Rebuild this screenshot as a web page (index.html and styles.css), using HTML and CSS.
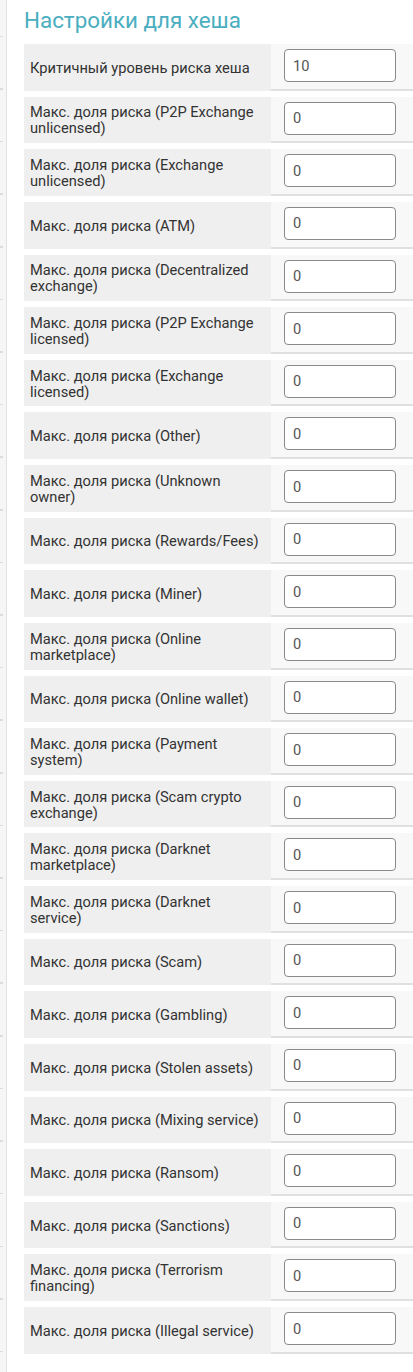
FILE: index.html
```html
<!DOCTYPE html>
<html lang="ru">
<head>
<meta charset="utf-8">
<link rel="stylesheet" href="styles.css">
</head>
<body>
<div class="page">
  <div class="side-strip"></div>
  <div class="content">
    <h3 class="title">Настройки для хеша</h3>
    <div class="rows">
      <div class="row"><div class="label">Критичный уровень риска хеша</div><div class="cell"><input class="field" value="10"></div></div>
      <div class="row"><div class="label">Макс. доля риска (P2P Exchange unlicensed)</div><div class="cell"><input class="field" value="0"></div></div>
      <div class="row"><div class="label">Макс. доля риска (Exchange unlicensed)</div><div class="cell"><input class="field" value="0"></div></div>
      <div class="row"><div class="label">Макс. доля риска (ATM)</div><div class="cell"><input class="field" value="0"></div></div>
      <div class="row"><div class="label">Макс. доля риска (Decentralized exchange)</div><div class="cell"><input class="field" value="0"></div></div>
      <div class="row"><div class="label">Макс. доля риска (P2P Exchange licensed)</div><div class="cell"><input class="field" value="0"></div></div>
      <div class="row"><div class="label">Макс. доля риска (Exchange licensed)</div><div class="cell"><input class="field" value="0"></div></div>
      <div class="row"><div class="label">Макс. доля риска (Other)</div><div class="cell"><input class="field" value="0"></div></div>
      <div class="row"><div class="label">Макс. доля риска (Unknown owner)</div><div class="cell"><input class="field" value="0"></div></div>
      <div class="row"><div class="label">Макс. доля риска (Rewards/Fees)</div><div class="cell"><input class="field" value="0"></div></div>
      <div class="row"><div class="label">Макс. доля риска (Miner)</div><div class="cell"><input class="field" value="0"></div></div>
      <div class="row"><div class="label">Макс. доля риска (Online marketplace)</div><div class="cell"><input class="field" value="0"></div></div>
      <div class="row"><div class="label">Макс. доля риска (Online wallet)</div><div class="cell"><input class="field" value="0"></div></div>
      <div class="row"><div class="label">Макс. доля риска (Payment system)</div><div class="cell"><input class="field" value="0"></div></div>
      <div class="row"><div class="label">Макс. доля риска (Scam crypto exchange)</div><div class="cell"><input class="field" value="0"></div></div>
      <div class="row"><div class="label">Макс. доля риска (Darknet marketplace)</div><div class="cell"><input class="field" value="0"></div></div>
      <div class="row"><div class="label">Макс. доля риска (Darknet service)</div><div class="cell"><input class="field" value="0"></div></div>
      <div class="row"><div class="label">Макс. доля риска (Scam)</div><div class="cell"><input class="field" value="0"></div></div>
      <div class="row"><div class="label">Макс. доля риска (Gambling)</div><div class="cell"><input class="field" value="0"></div></div>
      <div class="row"><div class="label">Макс. доля риска (Stolen assets)</div><div class="cell"><input class="field" value="0"></div></div>
      <div class="row"><div class="label">Макс. доля риска (Mixing service)</div><div class="cell"><input class="field" value="0"></div></div>
      <div class="row"><div class="label">Макс. доля риска (Ransom)</div><div class="cell"><input class="field" value="0"></div></div>
      <div class="row"><div class="label">Макс. доля риска (Sanctions)</div><div class="cell"><input class="field" value="0"></div></div>
      <div class="row"><div class="label">Макс. доля риска (Terrorism financing)</div><div class="cell"><input class="field" value="0"></div></div>
      <div class="row"><div class="label">Макс. доля риска (Illegal service)</div><div class="cell"><input class="field" value="0"></div></div>
    </div>
  </div>
</div>
</body>
</html>
```
FILE: styles.css
```css
html, body {
  margin: 0;
  padding: 0;
  background: #fff;
  font-family: Roboto, "Liberation Sans", sans-serif;
  overflow: hidden;
}
.page {
  display: flex;
  min-height: 1372px;
}
.side-strip {
  width: 6px;
  flex: 0 0 6px;
  border-right: 1px solid #e2e2e2;
  background-color: #f6f6f6;
  background-image: repeating-linear-gradient(to bottom, transparent 0, transparent 35.7px, #dcdcdc 35.7px, #dcdcdc 37.2px, transparent 37.2px, transparent 52.6px);
  background-size: 3px 100%;
  background-repeat: no-repeat;
  background-position: 0 0;
}
.content {
  flex: 1;
  padding-left: 17px;
  min-width: 0;
}
.title {
  margin: 0;
  padding-top: 5px;
  height: 44px;
  box-sizing: border-box;
  font-weight: 400;
  font-size: 22.4px;
  line-height: 30px;
  color: #4aaec0;
}
.rows {
  display: flex;
  flex-direction: column;
  gap: 6px;
}
.row {
  display: flex;
  height: 46.625px;
}
.label {
  width: 247px;
  flex: 0 0 247px;
  box-sizing: border-box;
  background: #efefef;
  padding: 1px 8px 0 6px;
  display: flex;
  align-items: center;
  font-size: 14.67px;
  line-height: 16px;
  color: #333;
}
.cell {
  flex: 1;
  background: #f8f8f8;
  border-bottom: 2px solid #e0e0e0;
  padding: 5px 0 0 13px;
  box-sizing: border-box;
}
.field {
  display: block;
  width: 112px;
  height: 33px;
  box-sizing: border-box;
  border: 1px solid #8a8a8a;
  border-radius: 4px;
  background: #fff;
  padding: 0 8px;
  font-family: Roboto, "Liberation Sans", sans-serif;
  font-size: 14.67px;
  color: #555;
  outline: none;
}
```
